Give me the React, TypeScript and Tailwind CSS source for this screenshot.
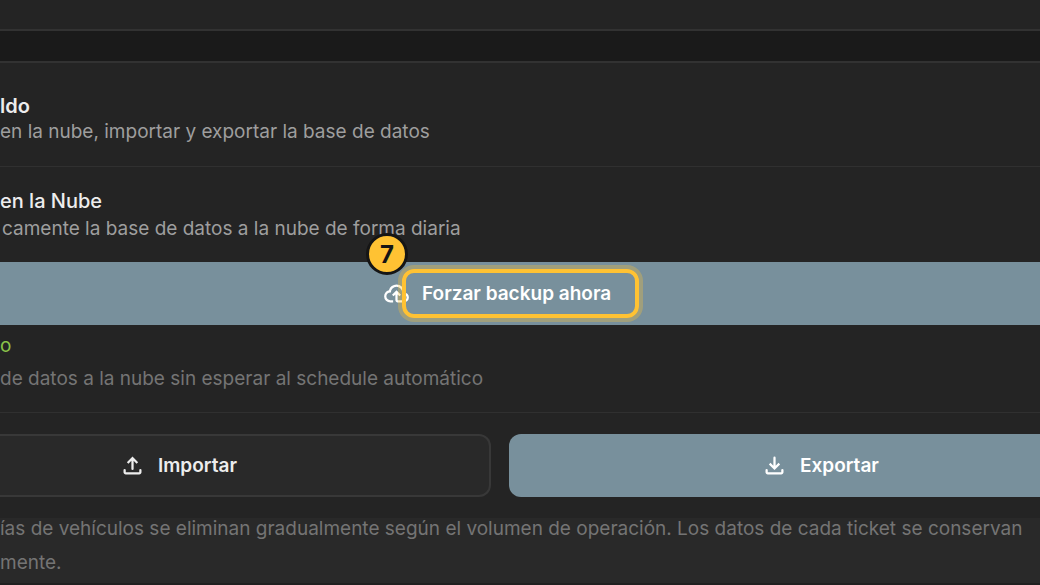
import { ReactNode } from "react";

function Icon({ d }: { d: string }) {
  return (
    <svg viewBox="0 0 24 24" className="mr-3 size-[27px] shrink-0" fill="currentColor" aria-hidden="true">
      <path d={d} />
    </svg>
  );
}

const TRAY = "M6 20q-.825 0-1.412-.587T4 18v-2q0-1 1-1t1 1v2h12v-2q0-1 1-1t1 1v2q0 .825-.587 1.413T18 20z";
const UPLOAD = "M11 7.850 8.400 10.450 7 9l5-5 5 5-1.400 1.450-2.600-2.600V15q0 1-1 1t-1-1z" + TRAY;
const DOWNLOAD = "M12 16 7 11l1.400-1.450 2.600 2.600V5q0-1 1-1t1 1v7.150l2.600-2.600L17 11z" + TRAY;
const CLOUD =
  "M6.5 20q-2.275 0-3.887-1.575T1 14.575q0-1.95 1.175-3.475T5.25 9.15q.625-2.3 2.5-3.725T12 4q2.925 0 4.963 2.038T19 11q1.725.2 2.863 1.488T23 15.5q0 1.875-1.312 3.188T18.5 20H13q-.825 0-1.412-.587T11 18v-5.15L9.4 14.4 8 13l4-4 4 4-1.4 1.4-1.6-1.55V18h5.5q1.05 0 1.775-.725T21 15.5t-.725-1.775T18.5 13H17v-2q0-2.075-1.463-3.537T12 6 8.463 7.463 7 11h-.5q-1.45 0-2.475 1.025T3 14.5t1.025 2.475T6.5 18H9v2z";

function Muted({ children }: { children: ReactNode }) {
  return <p className="text-[19px] leading-7 text-[#9e9e9e]">{children}</p>;
}

export default function App() {
  return (
    <main className="min-h-screen overflow-hidden whitespace-nowrap bg-[#1a1a1a] font-['Inter',sans-serif] text-[#ededed]">
      <div className="h-[31px] border-b-2 border-[#323232] bg-[#242424]" />
      <section className="mt-[30px] border-t-2 border-[#323232] bg-[#242424]">
        <header className="border-b border-[#303030] pb-5 pt-[31px]">
          <h2 className="text-[20px] font-semibold leading-6">ldo</h2>
          <Muted>en la nube, importar y exportar la base de datos</Muted>
        </header>
        <div className="border-b border-[#303030] pb-[19px] pt-5">
          <h3 className="text-[20px] font-medium leading-7">en la Nube</h3>
          <div className="pl-0.5">
            <Muted>camente la base de datos a la nube de forma diaria</Muted>
          </div>
          <button type="button" className="mt-[19px] flex h-[63px] w-full items-center bg-[#78909c] pl-[383px] text-[19px] font-semibold leading-[29px] text-white">
            <Icon d={CLOUD} />
            <span className="relative">
              Forzar backup ahora
              <span className="absolute -bottom-[10px] -left-5 -right-7 -top-[10px] rounded-xl border-4 border-[#ffc233] ring-4 ring-[#ffc233]/30" />
              <span className="absolute -left-14 -top-[46px] flex size-[42px] items-center justify-center rounded-full border-[3px] border-[#151515] bg-[#ffc233] text-[24px] font-bold text-[#151515]">7</span>
            </span>
          </button>
          <div className="pt-[7px] text-[19px] leading-7">
            <p className="text-[#8bc34a]">o</p>
            <p className="mt-[5px] text-[#747474]">de datos a la nube sin esperar al schedule automático</p>
          </div>
        </div>
        <div className="grid grid-cols-[491fr_531fr] gap-[18px] pt-[21px] text-[19px] font-semibold leading-[29px]">
          <button type="button" className="flex h-[63px] items-center rounded-r-xl border-2 border-l-0 border-[#383838] bg-[#292929] pl-[119px]">
            <Icon d={UPLOAD} />
            Importar
          </button>
          <button type="button" className="flex h-[63px] items-center rounded-l-xl bg-[#78909c] pl-[252px] text-white">
            <Icon d={DOWNLOAD} />
            Exportar
          </button>
        </div>
        <div className="mt-[21px] flow-root border-b-2 border-[#202020] bg-[#292929] pb-[3px] text-[19px] leading-[34px] text-[#747474]">
          <div className="-mt-1.5">
            <p>ías de vehículos se eliminan gradualmente según el volumen de operación. Los datos de cada ticket se conservan</p>
            <p>mente.</p>
          </div>
        </div>
      </section>
    </main>
  );
}
